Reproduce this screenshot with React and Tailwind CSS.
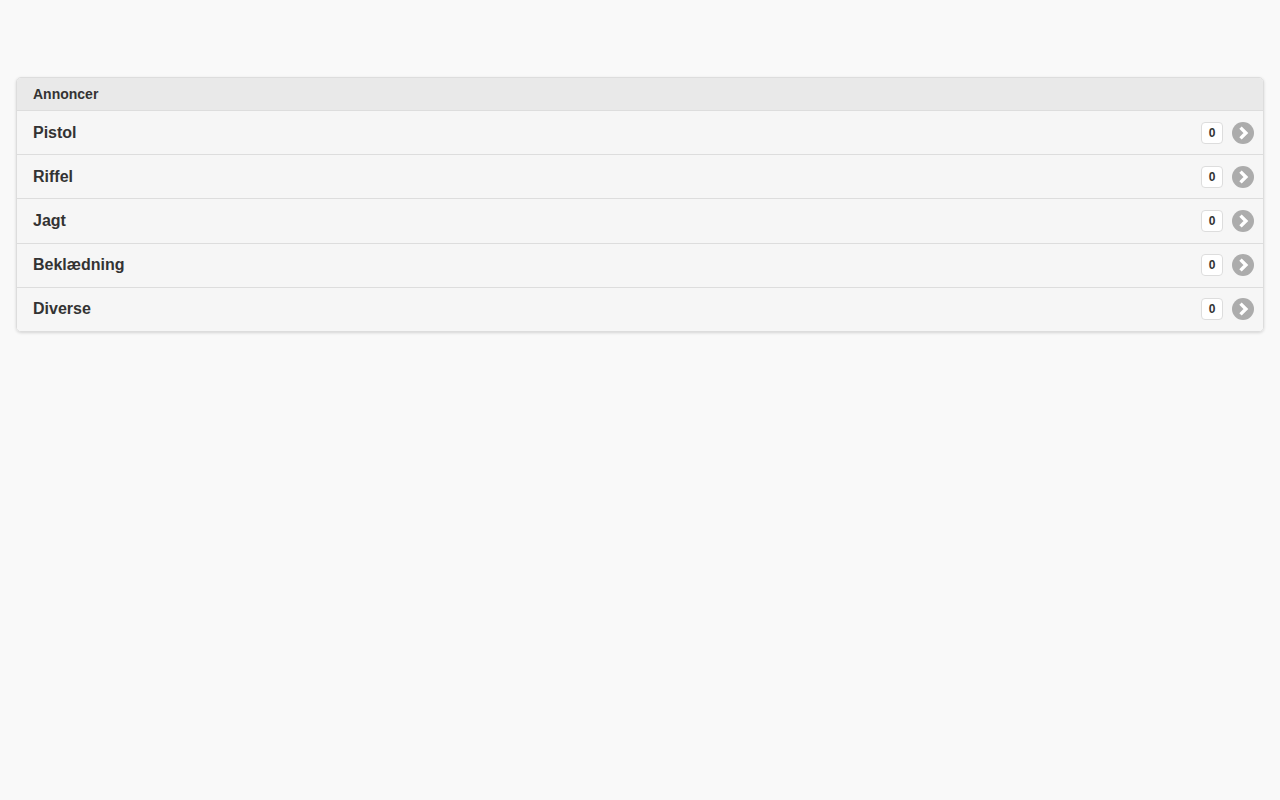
import React from "react";

const items = ["Pistol", "Riffel", "Jagt", "Beklædning", "Diverse"];

function Chevron() {
  return (
    <span className="flex h-[22px] w-[22px] items-center justify-center rounded-full bg-[#acacac]">
      <svg width="16" height="16" viewBox="0 0 16 16">
        <path d="M5.5 2.6 L10.9 8 L5.5 13.4" fill="none" stroke="#fff" strokeWidth="3.4" strokeLinecap="butt" strokeLinejoin="miter" />
      </svg>
    </span>
  );
}

export default function App() {
  return (
    <div className="min-h-[800px] bg-[#f9f9f9] pt-[77px] px-4 text-[#333]" style={{ fontFamily: '"Liberation Sans", Arial, sans-serif' }}>
      <div className="overflow-hidden rounded-[5px] border border-[#ddd] shadow-[0_1px_3px_rgba(0,0,0,0.15)]">
        <div className="flex h-[33px] items-center border-b border-[#ddd] bg-[#e9e9e9] px-4 text-[14px] font-bold">
          Annoncer
        </div>
        {items.map((t, i) => (
          <div
            key={t}
            className={`flex items-center bg-[#f6f6f6] pl-4 pr-[9px] ${i < items.length - 1 ? "h-[44.2px] border-b border-[#ddd]" : "h-[43px]"}`}
          >
            <span className="flex-1 text-[16px] font-bold">{t}</span>
            <span className="mr-[9px] flex h-[22px] min-w-[22px] items-center justify-center rounded-[4px] border border-[#ddd] bg-white px-[6px] text-[12px] font-bold">
              0
            </span>
            <Chevron />
          </div>
        ))}
      </div>
    </div>
  );
}
